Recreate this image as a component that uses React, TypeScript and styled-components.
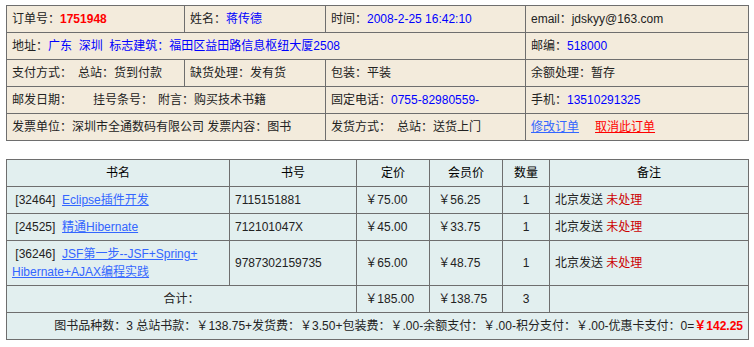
import React from "react";
import styled, { createGlobalStyle } from "styled-components";

const GlobalStyle = createGlobalStyle`
  body {
    margin: 0;
    background: #ffffff;
    font-family: "Liberation Sans", "Noto Sans CJK SC", sans-serif;
    font-size: 12px;
    color: #222222;
  }
`;

const Page = styled.div`
  padding: 5px 6px;
  display: flex;
  flex-direction: column;
  gap: 18px;
`;

const Grid = styled.table<{ $bg: string }>`
  width: 742px;
  border-collapse: collapse;
  table-layout: fixed;
  background: ${(p) => p.$bg};
`;

const Cell = styled.td<{ $align?: string; $tall?: boolean }>`
  border: 1px solid #6e6e6e;
  padding: 0 5px;
  height: ${(p) => (p.$tall ? "44px" : "26px")};
  line-height: 18px;
  text-align: ${(p) => p.$align || "left"};
  white-space: nowrap;
  overflow: hidden;
`;

const Head = styled(Cell).attrs({ as: "th" })`
  font-weight: normal;
  color: #000000;
  text-align: center;
`;

const Blue = styled.span`
  color: #0000ff;
`;

const OrderNo = styled.span`
  color: #ff0000;
  font-weight: bold;
`;

const Gap = styled.span<{ $w: number }>`
  display: inline-block;
  width: ${(p) => p.$w}px;
`;

const ActionLink = styled.a<{ $danger?: boolean }>`
  color: ${(p) => (p.$danger ? "#ff0000" : "#3366ff")};
  text-decoration: underline;
  margin-right: 16px;
  cursor: pointer;
`;

const BookLink = styled.a`
  color: #3366ff;
  text-decoration: underline;
  cursor: pointer;
`;

const Pending = styled.span`
  color: #cc0000;
`;

const Total = styled.span`
  color: #ff0000;
  font-weight: bold;
`;

const Yen = "￥";

type Book = {
  id: string;
  title: React.ReactNode;
  isbn: string;
  price: string;
  member: string;
  qty: number;
  tall?: boolean;
};

const books: Book[] = [
  { id: "32464", title: "Eclipse插件开发", isbn: "7115151881", price: "75.00", member: "56.25", qty: 1 },
  { id: "24525", title: "精通Hibernate", isbn: "712101047X", price: "45.00", member: "33.75", qty: 1 },
  {
    id: "36246",
    title: (
      <>
        JSF第一步--JSF+Spring+
        <br />
        Hibernate+AJAX编程实践
      </>
    ),
    isbn: "9787302159735",
    price: "65.00",
    member: "48.75",
    qty: 1,
    tall: true,
  },
];

export default function App() {
  return (
    <>
      <GlobalStyle />
      <Page>
        <Grid $bg="#f3ebdc">
          <colgroup>
            <col style={{ width: 178 }} />
            <col style={{ width: 141 }} />
            <col style={{ width: 200 }} />
            <col style={{ width: 223 }} />
          </colgroup>
          <tbody>
            <tr>
              <Cell>
                订单号：<OrderNo>1751948</OrderNo>
              </Cell>
              <Cell>
                姓名：<Blue>蒋传德</Blue>
              </Cell>
              <Cell>
                时间：<Blue>2008-2-25 16:42:10</Blue>
              </Cell>
              <Cell>email：jdskyy@163.com</Cell>
            </tr>
            <tr>
              <Cell colSpan={3}>
                地址：<Blue>广东&nbsp;&nbsp;深圳&nbsp;&nbsp;标志建筑：福田区益田路信息枢纽大厦2508</Blue>
              </Cell>
              <Cell>
                邮编：<Blue>518000</Blue>
              </Cell>
            </tr>
            <tr>
              <Cell>
                支付方式：<Gap $w={6} />总站：货到付款
              </Cell>
              <Cell>缺货处理：发有货</Cell>
              <Cell>包装：平装</Cell>
              <Cell>余额处理：暂存</Cell>
            </tr>
            <tr>
              <Cell colSpan={2}>
                邮发日期：<Gap $w={21} />挂号条号：<Gap $w={5} />附言：购买技术书籍
              </Cell>
              <Cell>
                固定电话：<Blue>0755-82980559-</Blue>
              </Cell>
              <Cell>
                手机：<Blue>13510291325</Blue>
              </Cell>
            </tr>
            <tr>
              <Cell colSpan={2}>发票单位：深圳市全通数码有限公司 发票内容：图书</Cell>
              <Cell>
                发货方式：<Gap $w={6} />总站：送货上门
              </Cell>
              <Cell>
                <ActionLink>修改订单</ActionLink>
                <ActionLink $danger>取消此订单</ActionLink>
              </Cell>
            </tr>
          </tbody>
        </Grid>

        <Grid $bg="#e2efef">
          <colgroup>
            <col style={{ width: 223 }} />
            <col style={{ width: 127 }} />
            <col style={{ width: 73 }} />
            <col style={{ width: 73 }} />
            <col style={{ width: 47 }} />
            <col style={{ width: 199 }} />
          </colgroup>
          <thead>
            <tr>
              <Head>书名</Head>
              <Head>书号</Head>
              <Head>定价</Head>
              <Head>会员价</Head>
              <Head>数量</Head>
              <Head>备注</Head>
            </tr>
          </thead>
          <tbody>
            {books.map((b) => (
              <tr key={b.id}>
                <Cell $tall={b.tall}>
                  &nbsp;[{b.id}]&nbsp;&nbsp;<BookLink>{b.title}</BookLink>
                </Cell>
                <Cell>{b.isbn}</Cell>
                <Cell>&nbsp;{Yen}{b.price}</Cell>
                <Cell>&nbsp;{Yen}{b.member}</Cell>
                <Cell $align="center">{b.qty}</Cell>
                <Cell>
                  北京发送 <Pending>未处理</Pending>
                </Cell>
              </tr>
            ))}
            <tr>
              <Cell colSpan={2} $align="center">
                合计：
              </Cell>
              <Cell>&nbsp;{Yen}185.00</Cell>
              <Cell>&nbsp;{Yen}138.75</Cell>
              <Cell $align="center">3</Cell>
              <Cell />
            </tr>
            <tr>
              <Cell colSpan={6} $align="right">
                图书品种数：3 总站书款：{Yen}138.75+发货费：{Yen}3.50+包装费：{Yen}.00-余额支付：{Yen}.00-积分支付：{Yen}.00-优惠卡支付：0=
                <Total>{Yen}142.25</Total>
              </Cell>
            </tr>
          </tbody>
        </Grid>
      </Page>
    </>
  );
}
